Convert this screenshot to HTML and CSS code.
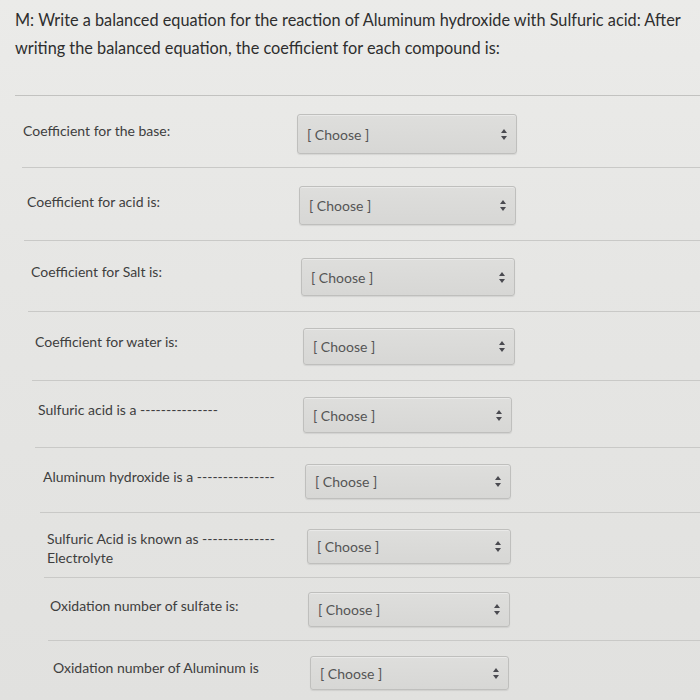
FILE: index.html
```html
<!DOCTYPE html>
<html>
<head>
<meta charset="utf-8">
<link rel="stylesheet" href="styles.css">
</head>
<body>
<div class="page">
  <p class="question">M: Write a balanced equation for the reaction of Aluminum hydroxide with Sulfuric acid: After writing the balanced equation, the coefficient for each compound is:</p>
  <div class="list">
    <div class="row">
      <div class="label">Coefficient for the base:</div>
      <div class="select"><span>[ Choose ]</span><i class="arrows"></i></div>
    </div>
    <div class="row">
      <div class="label">Coefficient for acid is:</div>
      <div class="select"><span>[ Choose ]</span><i class="arrows"></i></div>
    </div>
    <div class="row">
      <div class="label">Coefficient for Salt is:</div>
      <div class="select"><span>[ Choose ]</span><i class="arrows"></i></div>
    </div>
    <div class="row">
      <div class="label">Coefficient for water is:</div>
      <div class="select"><span>[ Choose ]</span><i class="arrows"></i></div>
    </div>
    <div class="row">
      <div class="label">Sulfuric acid is a ---------------</div>
      <div class="select"><span>[ Choose ]</span><i class="arrows"></i></div>
    </div>
    <div class="row">
      <div class="label">Aluminum hydroxide is a ---------------</div>
      <div class="select"><span>[ Choose ]</span><i class="arrows"></i></div>
    </div>
    <div class="row">
      <div class="label">Sulfuric Acid is known as --------------<br>Electrolyte</div>
      <div class="select"><span>[ Choose ]</span><i class="arrows"></i></div>
    </div>
    <div class="row">
      <div class="label">Oxidation number of sulfate is:</div>
      <div class="select"><span>[ Choose ]</span><i class="arrows"></i></div>
    </div>
    <div class="row">
      <div class="label">Oxidation number of Aluminum is</div>
      <div class="select"><span>[ Choose ]</span><i class="arrows"></i></div>
    </div>
  </div>
</div>
</body>
</html>
```

FILE: styles.css
```css
html, body {
  margin: 0;
  padding: 0;
}
body {
  width: 700px;
  height: 700px;
  overflow: hidden;
  background: linear-gradient(180deg, #ebebe9 0%, #e6e6e4 40%, #e1e1df 100%);
  font-family: Lato, "Open Sans", sans-serif;
  color: #3a3a3a;
}
.page {
  padding: 0;
}
.question {
  margin: 0;
  padding: 6px 10px 0 15px;
  height: 95px;
  box-sizing: border-box;
  font-size: 16.3px;
  line-height: 28px;
  color: #2e2e2e;
  width: 700px;
}
.list {
  display: flex;
  flex-direction: column;
}
.row {
  --ml: 15px; --h: 72px; --lx: 23px; --sx: 297px; --sw: 220px; --sh: 40px; --st: 18px; --lt: 25px;
  display: grid;
  grid-template-columns: calc(var(--sx) - var(--ml)) var(--sw);
  align-items: start;
  margin-left: var(--ml);
  height: var(--h);
  box-sizing: border-box;
  border-top: 1px solid #c9c9c7;
}
.row:first-child { border-top-color: #c2c2c0; }
.row:nth-child(2) { --ml: 22px; --h: 73px; --lx: 27px; --sx: 299px; --sw: 217px; --sh: 39px; --st: 18px; --lt: 24px; }
.row:nth-child(3) { --ml: 24px; --h: 71px; --lx: 31px; --sx: 301px; --sw: 214px; --sh: 38px; --st: 17px; --lt: 21px; }
.row:nth-child(4) { --ml: 28px; --h: 69px; --lx: 35px; --sx: 303px; --sw: 212px; --sh: 37px; --st: 16px; --lt: 20px; }
.row:nth-child(5) { --ml: 32px; --h: 67px; --lx: 38px; --sx: 303px; --sw: 209px; --sh: 36px; --st: 16px; --lt: 19px; }
.row:nth-child(6) { --ml: 35px; --h: 65px; --lx: 43px; --sx: 305px; --sw: 206px; --sh: 35px; --st: 16px; --lt: 19px; }
.row:nth-child(7) { --ml: 40px; --h: 65px; --lx: 47px; --sx: 307px; --sw: 204px; --sh: 35px; --st: 16px; --lt: 16px; }
.row:nth-child(8) { --ml: 44px; --h: 63px; --lx: 50px; --sx: 308px; --sw: 202px; --sh: 35px; --st: 14px; --lt: 18px; }
.row:nth-child(9) { --ml: 48px; --h: 63px; --lx: 53px; --sx: 310px; --sw: 199px; --sh: 34px; --st: 15px; --lt: 17px; }

.label {
  padding-left: calc(var(--lx) - var(--ml));
  margin-top: var(--lt);
  font-size: 14px;
  line-height: 19px;
  color: #3e3e3e;
  white-space: nowrap;
}
.select {
  margin-top: var(--st);
  height: var(--sh);
  box-sizing: border-box;
  display: flex;
  align-items: center;
  justify-content: space-between;
  padding: 0 9px 0 9px;
  background: linear-gradient(180deg, #dededc 0%, #d7d7d5 100%);
  border: 1px solid #bfbfbd;
  border-radius: 3px;
  box-shadow: 0 1px 1px rgba(0,0,0,0.08), inset 0 1px 0 rgba(255,255,255,0.35);
  font-size: 14px;
  color: #555;
}
.arrows {
  position: relative;
  width: 6px;
  height: 11px;
}
.arrows::before,
.arrows::after {
  content: "";
  position: absolute;
  left: 0;
  border-left: 3px solid transparent;
  border-right: 3px solid transparent;
}
.arrows::before {
  top: 0;
  border-bottom: 4px solid #4a4a50;
}
.arrows::after {
  bottom: 0;
  border-top: 4px solid #4a4a50;
}
```
